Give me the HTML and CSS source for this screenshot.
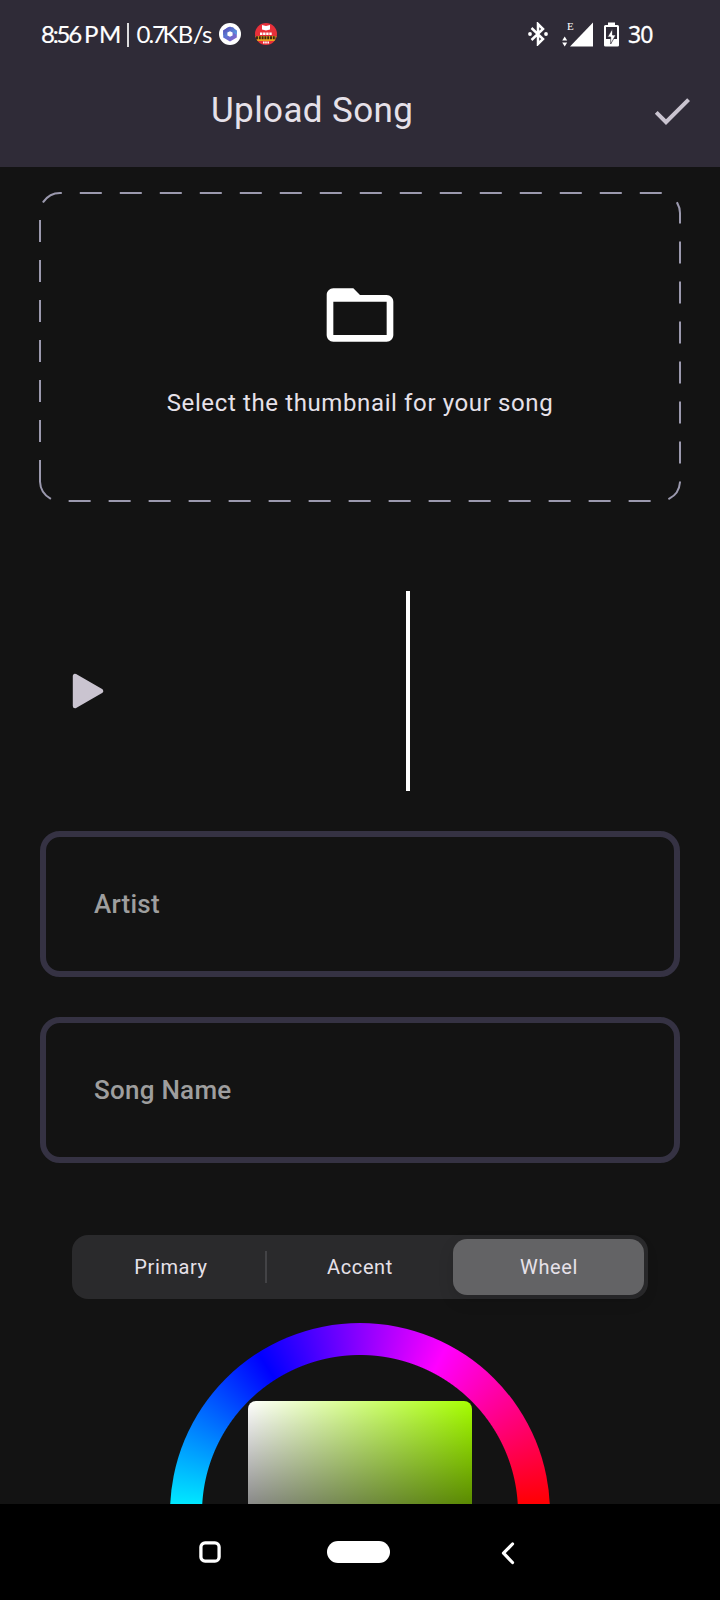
FILE: index.html
```html
<!DOCTYPE html>
<html lang="en">
<head>
<meta charset="utf-8">
<title>Upload Song</title>
<link rel="stylesheet" href="styles.css">
</head>
<body>
<div class="screen">
  <header class="header">
    <div class="status">
      <div class="status-left">
        <span class="clock">8:56</span><span class="meridiem">PM</span><span class="bar"></span><span class="speed">0.7</span><span class="unit">KB/s</span>
        <svg class="app-icon" width="22" height="22" viewBox="0 0 22 22">
          <defs>
            <linearGradient id="a" x1="0" y1="0" x2="1" y2="1"><stop offset="0" stop-color="#5a3fb0"/><stop offset="1" stop-color="#58b4f0"/></linearGradient>
            <linearGradient id="b" x1="0" y1="0" x2="1" y2="1"><stop offset="0" stop-color="#3d7ad8"/><stop offset="1" stop-color="#8a62c8"/></linearGradient>
          </defs>
          <circle cx="11" cy="11" r="11" fill="#fff"/>
          <path d="M11 3.6 17.8 7.4V14.6L11 18.4 4.2 14.6V7.4Z" fill="url(#b)"/>
          <path d="M4.2 12V7.4L9 4.2H14L17.8 8V12L13 8.6H8.5L8 14Z" fill="url(#a)"/>
          <path d="M11 8.2 13.6 9.6V12.4L11 13.8 8.4 12.4V9.6Z" fill="#fff"/>
        </svg>
        <svg class="app-icon second" width="22" height="22" viewBox="0 0 22 22">
          <circle cx="11" cy="11" r="11" fill="#e8303a"/>
          <path d="M7 2 11 3 15 2V6.6L11 7.6 7 6.6Z" fill="#fff"/>
          <path d="M0.5 13H21.5L19.5 18H2.5Z" fill="#e9a51f"/>
          <path d="M5 10.7H17" stroke="#fff" stroke-width="2.4" stroke-dasharray="2.4 .7"/>
          <path d="M1 14.8H21" stroke="#3b2a10" stroke-width="3" stroke-dasharray="2 .8"/>
          <path d="M8 19.6H14" stroke="#fff" stroke-width="2" stroke-dasharray="1.6 .6"/>
        </svg>
      </div>
      <div class="status-right">
        <svg width="20" height="24" viewBox="0 0 20 24">
          <path d="M3.5 6 15 17 10 22V2L15 7 3.5 18" fill="none" stroke="#fff" stroke-width="2.5"/>
          <circle cx="2" cy="12" r="1.9" fill="#fff"/><circle cx="18" cy="12" r="1.9" fill="#fff"/>
        </svg>
        <svg class="signal" width="32" height="26" viewBox="0 0 32 26">
          <path d="M31 1.5V25.5H8Z" fill="#fff"/>
          <path d="M.2 19.4 2.7 15.6 5.2 19.4ZM.2 21.6 2.7 25.4 5.2 21.6Z" fill="#fff"/>
          <text class="edge" x="5" y="9.4">E</text>
        </svg>
        <svg class="battery" width="15" height="25" viewBox="0 0 15 25">
          <path fill-rule="evenodd" d="M4 0.5H11V3H13.5Q15 3 15 4.5V23.2Q15 24.5 13.5 24.5H1.5Q0 24.5 0 23.2V4.5Q0 3 1.5 3H4ZM2 5V17H13V5Z" fill="#fff"/>
          <path d="M8 7.5 3.5 15H6.7V22L11.8 13H8.5V7.5Z" fill="#fff" stroke="#2f2b37" stroke-width=".7"/>
        </svg>
        <span class="level">30</span>
      </div>
    </div>
    <div class="appbar">
      <h1 class="title">Upload Song</h1>
      <svg class="check" width="48" height="48" viewBox="0 0 24 24"><path d="M9 16.17 4.83 12l-1.42 1.41L9 19 21 7l-1.41-1.41z" fill="#cac4d0"/></svg>
    </div>
  </header>

  <main class="content">
    <section class="picker">
      <svg class="outline" width="644" height="312" viewBox="38 191 644 312">
        <path d="M40 481V213A20 20 0 0 1 60 193H660A20 20 0 0 1 680 213V481A20 20 0 0 1 660 501H60A20 20 0 0 1 40 481" fill="none" stroke="#9b99ae" stroke-width="2" stroke-linecap="square" stroke-dasharray="20 20"/>
      </svg>
      <svg width="80" height="80" viewBox="0 0 24 24"><path d="M20 6h-8l-2-2H4c-1.1 0-1.99.9-1.99 2L2 18c0 1.1.9 2 2 2h16c1.1 0 2-.9 2-2V8c0-1.1-.9-2-2-2zm0 12H4V8h16v10z" fill="#fff"/></svg>
      <p class="picker-label">Select the thumbnail for your song</p>
    </section>

    <section class="player">
      <svg width="32" height="36" viewBox="0 0 32 36"><path d="M3 3V33L29 18Z" fill="#cac4d0" stroke="#cac4d0" stroke-width="4.4" stroke-linejoin="round"/></svg>
      <div class="playhead"></div>
    </section>

    <div class="field">Artist</div>
    <div class="field">Song Name</div>

    <nav class="tabs">
      <span class="tab">Primary</span>
      <span class="divider"></span>
      <span class="tab accent">Accent</span>
      <span class="tab active">Wheel</span>
    </nav>

    <div class="wheel">
      <div class="ring"></div>
      <div class="shade"></div>
    </div>
  </main>

  <footer class="navbar">
    <svg width="22" height="22" viewBox="0 0 22 22"><rect x="1.9" y="1.9" width="18.2" height="18.2" rx="4.2" fill="none" stroke="#fff" stroke-width="3.3"/></svg>
    <span class="home"></span>
    <svg class="back" width="14" height="24" viewBox="0 0 14 24"><path d="M11.5 3 2.5 12.2 11.5 21.5" fill="none" stroke="#fff" stroke-width="3.2" stroke-linecap="round" stroke-linejoin="round"/></svg>
  </footer>
</div>
</body>
</html>
```

FILE: styles.css
```css
* { box-sizing: border-box; }
body { margin: 0; background: #131313; font-family: Roboto, "Liberation Sans", sans-serif; }
svg { display: block; flex: none; }
.screen { width: 720px; height: 1600px; display: flex; flex-direction: column; overflow: hidden; background: #131313; }

.header { height: 167px; flex: none; background: #2f2b37; color: #e6e1e9; }
.status { height: 68px; display: flex; justify-content: space-between; padding: 0 67px 0 41px; color: #fff; }
.status-left, .status-right { display: flex; align-items: center; white-space: nowrap; }
.status-left { font: 24px/30px Lato, sans-serif; }
.clock { width: 43px; letter-spacing: -2.2px; -webkit-text-stroke: .2px #fff; }
.meridiem { width: 43px; letter-spacing: .6px; -webkit-text-stroke: .2px #fff; }
.bar { width: 1.5px; height: 24px; background: #ddd; margin-right: 8px; margin-top: 2px; }
.speed { width: 26px; letter-spacing: -2px; }
.unit { width: 49px; letter-spacing: -.6px; }
.app-icon { margin-left: 7px; }
.app-icon.second { margin-left: 14px; }
.signal { margin-left: 14px; }
.battery { margin-left: 10px; }
.edge { font: 11px "Liberation Serif", serif; fill: #fff; }
.level { margin-left: 9px; width: 25px; font: 23px/30px "Noto Sans", sans-serif; letter-spacing: -.8px; -webkit-text-stroke: .3px #fff; }

.appbar { height: 99px; display: flex; justify-content: space-between; padding: 0 24px 0 211px; }
.title { margin: 21px 0 0; font-size: 35px; line-height: 44px; font-weight: 400; letter-spacing: .4px; }
.check { margin-top: 19px; }

.content { flex: 1; min-height: 0; overflow: hidden; padding: 24px 40px 0; }
.picker { position: relative; height: 312px; display: flex; flex-direction: column; align-items: center; padding-top: 84px; }
.outline { position: absolute; left: -2px; top: 0; }
.picker-label { margin: 33px 0 0; font-size: 24px; line-height: 30px; letter-spacing: .62px; color: #e6e1e9; white-space: nowrap; }

.player { height: 200px; margin-top: 88px; padding-left: 31.5px; display: flex; align-items: center; }
.playhead { width: 4px; height: 200px; margin-left: 302.5px; background: #fff; }

.field { height: 146px; margin-top: 40px; border: 6px solid #353243; border-radius: 20px; padding-left: 48px; font-size: 26px; line-height: 134px; font-weight: 500; letter-spacing: .25px; color: #9e9e9e; }

.tabs { height: 64px; margin: 72px 32px 0; padding: 4px; border-radius: 16px; background: #2a2a2c; display: flex; align-items: center; font-size: 20px; letter-spacing: .6px; color: #e6e1e9; }
.tab { width: 189px; padding-left: 1px; text-align: center; line-height: 56px; }
.divider { width: 2px; height: 32px; background: #434346; }
.accent { width: 186px; padding-left: 0; }
.tab.active { width: 191px; height: 56px; border-radius: 14px; background: #636365; box-shadow: 0 6px 16px rgba(0, 0, 0, .12); }

.wheel { width: 380px; height: 380px; margin: 24px auto 0; display: grid; place-items: center; }
.ring, .shade { grid-area: 1 / 1; }
.ring { width: 380px; height: 380px; border-radius: 50%; background: radial-gradient(circle, #131313 157.5px, transparent 158.5px), conic-gradient(from 87.5deg, #f00, #ff0, #0f0, #0ff, #00f, #f0f, #f00); }
.shade { width: 224px; height: 224px; border-radius: 8px; background: linear-gradient(transparent, #000), linear-gradient(90deg, #fff, #a6ff00); }

.navbar { height: 96px; flex: none; background: #000; display: flex; padding: 37px 0 0 199px; }
.home { width: 63px; height: 22px; margin-left: 106px; border-radius: 11px; background: #fff; }
.back { margin-left: 111px; }
```
